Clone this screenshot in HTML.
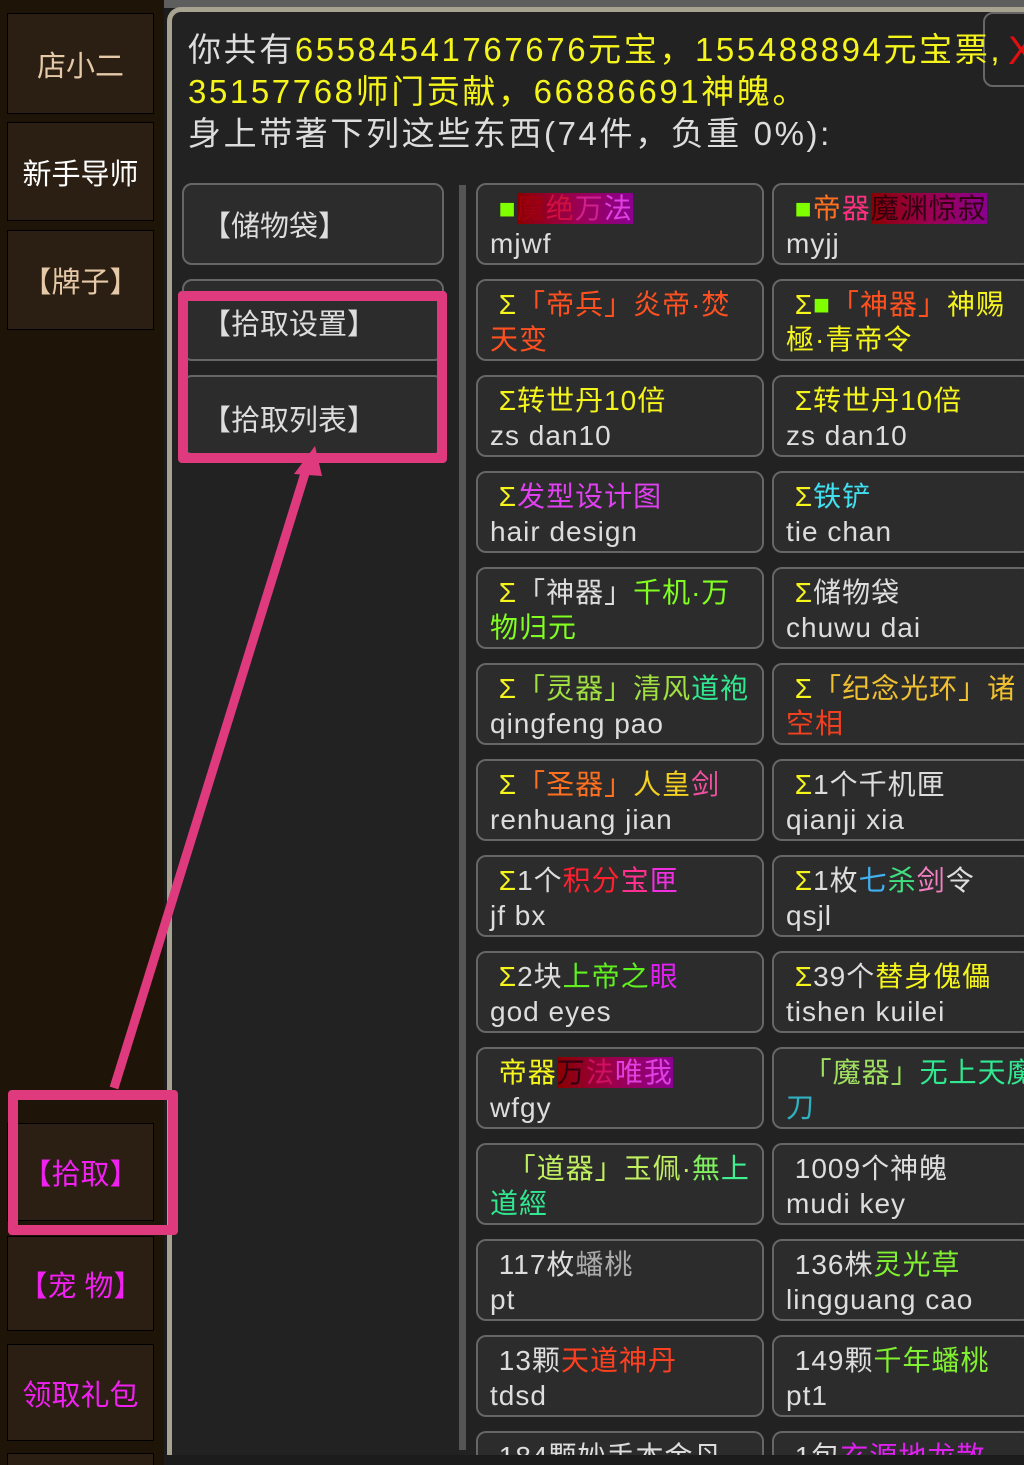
<!DOCTYPE html>
<html style="width:1024px;height:1465px;overflow:hidden"><head><meta charset="utf-8"><style>
*{margin:0;padding:0;box-sizing:border-box}
body{width:1024px;height:1465px;overflow:hidden;background:#1c1c1c;position:relative;font-family:"Liberation Sans","Noto Sans CJK SC",sans-serif}
.abs{position:absolute}
#side{left:0;top:0;width:164px;height:1465px;background:#1f1408}
.sb{position:absolute;left:7px;width:147px;background:#2a1f12;border:1.5px solid #000;color:#e6c9a8;font-size:29px;display:flex;align-items:center;justify-content:center}
#topbar{left:164px;top:0;width:860px;height:8px;background:#5e5e5e}
#frame{left:167px;top:7px;width:900px;height:1448px;border:5px solid #a8a390;border-right:none;border-bottom:none;border-radius:14px 0 0 0;background:#222;overflow:hidden}
.hd{position:absolute;left:188px;font-size:33px;letter-spacing:2.6px;line-height:42px;white-space:nowrap;color:#ddd}
.y{color:#f5f51c}
.lb{position:absolute;left:182px;width:262px;height:82px;background:#2c2c2c;border:2.5px solid #666;border-radius:10px;color:#ddd;font-size:29px;padding:18px 0 0 18px}
.c{position:absolute;width:288px;height:82px;background:#2c2c2c;border:2.5px solid #666;border-radius:10px;color:#ddd;font-size:28px;letter-spacing:1px;line-height:35px;padding:6px 0 0 12px;overflow:hidden;white-space:nowrap}
.c2{width:270px}
.s{color:#f5f51c}
.g{color:#7fff00}
</style></head><body>
<div id="side" class="abs"></div>
<div class="sb" style="top:13px;height:101px">店小二</div>
<div class="sb" style="top:122px;height:99px;color:#fff">新手导师</div>
<div class="sb" style="top:230px;height:100px">【牌子】</div>
<div class="sb" style="top:1123px;height:98px;color:#f020f0">【拾取】</div>
<div class="sb" style="top:1236px;height:95px;color:#f020f0">【宠 物】</div>
<div class="sb" style="top:1344px;height:97px;color:#f020f0">领取礼包</div>
<div class="sb" style="top:1453px;height:12px;border-bottom:none"></div>
<div id="topbar" class="abs"></div>
<div id="frame" class="abs"></div>
<div class="abs" style="left:983px;top:12px;width:60px;height:75px;border:2.5px solid #666;border-radius:10px"></div>
<div class="abs" style="left:1008px;top:26px;color:#e01010;font-size:40px;line-height:50px">X</div>
<div class="hd" style="top:29px">你共有<span class="y">65584541767676元宝，155488894元宝票,</span></div>
<div class="hd y" style="top:71px">35157768师门贡献，66886691神魄。</div>
<div class="hd" style="top:113px">身上带著下列这些东西(74件，负重 0%):</div>

<div class="lb" style="top:183px">【储物袋】</div>
<div class="lb" style="top:279px;height:82px;padding-top:20px">【拾取设置】</div>
<div class="lb" style="top:375px;height:80px;padding-top:20px">【拾取列表】</div>
<div class="abs" style="left:178px;top:291px;width:269px;height:172px;border:10px solid #e03a7e;border-radius:4px"></div>

<div class="abs" style="left:459px;top:185px;width:7px;height:1265px;background:#555"></div>

<div class="c" style="left:476px;top:183px">&nbsp;<span class="g">■</span><span style="background:linear-gradient(90deg,#8a0000,#9a0050,#8a0090)"><span style="color:#a00010">魔</span><span style="color:#d01040">绝</span><span style="color:#d02090">万</span><span style="color:#e040e0">法</span></span><br>mjwf</div>
<div class="c c2" style="left:772px;top:183px;width:260px">&nbsp;<span class="g">■</span><span style="color:#ff7020">帝</span><span style="color:#ff3080">器</span><span style="background:linear-gradient(90deg,#8a0000,#9a0050,#8a0090);color:#300010">魔渊惊寂</span><br>myjj</div>

<div class="c" style="left:476px;top:279px;color:#ff5020">&nbsp;<span class="s">Σ</span>「帝兵」炎帝·焚<br>天变</div>
<div class="c c2" style="left:772px;top:279px;width:260px;color:#f5f51c">&nbsp;Σ<span class="g">■</span><span style="color:#ff5020">「神器」</span>神赐<br>極·青帝令</div>

<div class="c s" style="left:476px;top:375px">&nbsp;Σ转世丹10倍<br><span style="color:#ddd">zs dan10</span></div>
<div class="c c2 s" style="left:772px;top:375px;width:260px">&nbsp;Σ转世丹10倍<br><span style="color:#ddd">zs dan10</span></div>

<div class="c" style="left:476px;top:471px">&nbsp;<span class="s">Σ</span><span style="color:#e040f0">发型设计图</span><br>hair design</div>
<div class="c" style="left:772px;top:471px;width:260px">&nbsp;<span class="s">Σ</span><span style="color:#40e0f0">铁铲</span><br>tie chan</div>

<div class="c" style="left:476px;top:567px">&nbsp;<span class="s">Σ</span>「神器」<span style="color:#80ff20">千机·万<br>物归元</span></div>
<div class="c" style="left:772px;top:567px;width:260px">&nbsp;<span class="s">Σ</span>储物袋<br>chuwu dai</div>

<div class="c" style="left:476px;top:663px">&nbsp;<span class="s">Σ</span><span style="color:#a0e040">「灵器」清风</span><span style="color:#30e890">道袍</span><br>qingfeng pao</div>
<div class="c" style="left:772px;top:663px;width:260px">&nbsp;<span class="s">Σ</span><span style="color:#f0c030">「纪念光环」诸</span><br><span style="color:#f04020">空相</span></div>

<div class="c" style="left:476px;top:759px">&nbsp;<span class="s">Σ</span><span style="color:#ff7020">「圣器」</span><span style="color:#f5d020">人皇</span><span style="color:#f050a0">剑</span><br>renhuang jian</div>
<div class="c" style="left:772px;top:759px;width:260px">&nbsp;<span class="s">Σ</span>1个千机匣<br>qianji xia</div>

<div class="c" style="left:476px;top:855px">&nbsp;<span class="s">Σ</span>1个<span style="color:#ff2030">积分</span><span style="color:#ff3090">宝</span><span style="color:#f030e0">匣</span><br>jf bx</div>
<div class="c" style="left:772px;top:855px;width:260px">&nbsp;<span class="s">Σ</span>1枚<span style="color:#40b0f0">七</span><span style="color:#40e080">杀</span><span style="color:#f080c0">剑</span>令<br>qsjl</div>

<div class="c" style="left:476px;top:951px">&nbsp;<span class="s">Σ</span>2块<span style="color:#60f020">上帝之</span><span style="color:#e020f0">眼</span><br>god eyes</div>
<div class="c" style="left:772px;top:951px;width:260px">&nbsp;<span class="s">Σ</span>39个<span class="s">替身傀儡</span><br>tishen kuilei</div>

<div class="c" style="left:476px;top:1047px">&nbsp;<span class="s">帝器</span><span style="background:linear-gradient(90deg,#8a0000,#9a0050,#8a0090);color:#300010">万<span style="color:#d01060">法</span><span style="color:#e040e0">唯我</span></span><br>wfgy</div>
<div class="c" style="left:772px;top:1047px;width:260px;color:#30e890">&nbsp;&nbsp;<span style="color:#a0e060">「魔器」</span>无上天魔<br><span style="color:#30b0c0">刀</span></div>

<div class="c" style="left:476px;top:1143px">&nbsp;&nbsp;<span style="color:#c0f060">「道器」玉佩·</span><span style="color:#80f060">無</span><span style="color:#40f090">上</span><br><span style="color:#30e890">道經</span></div>
<div class="c" style="left:772px;top:1143px;width:260px">&nbsp;1009个神魄<br>mudi key</div>

<div class="c" style="left:476px;top:1239px">&nbsp;117枚<span style="color:#aaa">蟠桃</span><br>pt</div>
<div class="c" style="left:772px;top:1239px;width:260px">&nbsp;136株<span style="color:#80f030">灵光草</span><br>lingguang cao</div>

<div class="c" style="left:476px;top:1335px">&nbsp;13颗<span style="color:#ff4020">天道神丹</span><br>tdsd</div>
<div class="c" style="left:772px;top:1335px;width:260px">&nbsp;149颗<span style="color:#80f030">千年蟠桃</span><br>pt1</div>

<div class="c" style="left:476px;top:1431px;height:24px;border-bottom:none;border-radius:10px 10px 0 0">&nbsp;184颗妙手本金丹</div>
<div class="c" style="left:772px;top:1431px;width:260px;height:24px;border-bottom:none;border-radius:10px 10px 0 0">&nbsp;1包<span style="color:#e020f0">玄源地龙散</span></div>

<div class="abs" style="left:172px;top:1455px;width:852px;height:10px;background:#1c1c1c"></div>

<div class="abs" style="left:8px;top:1090px;width:170px;height:145px;border:10px solid #e03a7e;border-radius:4px"></div>
<svg class="abs" style="left:0;top:0" width="1024" height="1465">
<line x1="114" y1="1088" x2="306" y2="470" stroke="#e03a7e" stroke-width="9"/>
<polygon points="315,446 294,474 322,476" fill="#e03a7e"/>
</svg>
</body></html>
